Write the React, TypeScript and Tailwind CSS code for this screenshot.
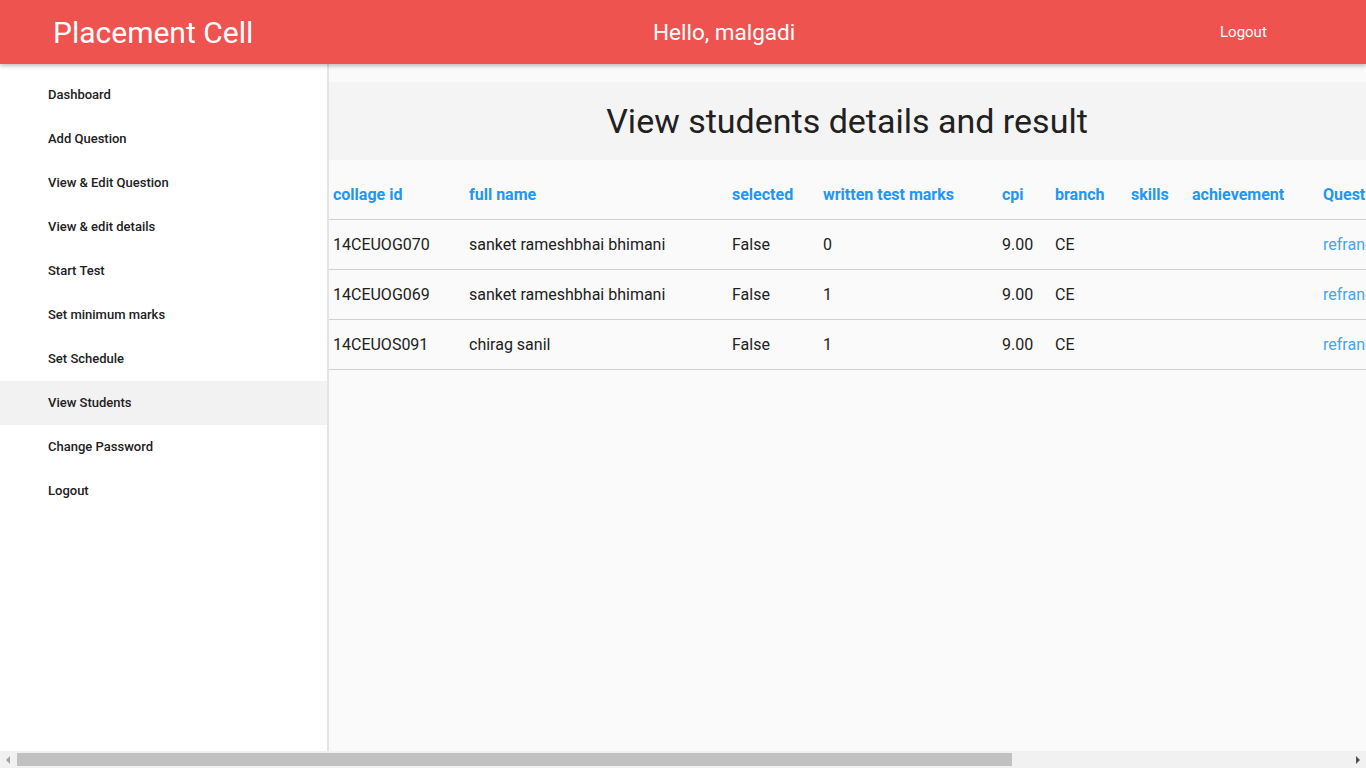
import React from 'react';

const navItems = [
  'Dashboard',
  'Add Question',
  'View & Edit Question',
  'View & edit details',
  'Start Test',
  'Set minimum marks',
  'Set Schedule',
  'View Students',
  'Change Password',
  'Logout',
];

const columns = [
  { label: 'collage id', w: 'w-[136px]' },
  { label: 'full name', w: 'w-[263px]' },
  { label: 'selected', w: 'w-[91px]' },
  { label: 'written test marks', w: 'w-[179px]' },
  { label: 'cpi', w: 'w-[53px]' },
  { label: 'branch', w: 'w-[76px]' },
  { label: 'skills', w: 'w-[61px]' },
  { label: 'achievement', w: 'w-[131px]' },
  { label: 'Questions', w: 'w-[160px]' },
];

const students = [
  { id: '14CEUOG070', name: 'sanket rameshbhai bhimani', selected: 'False', marks: '0', cpi: '9.00', branch: 'CE' },
  { id: '14CEUOG069', name: 'sanket rameshbhai bhimani', selected: 'False', marks: '1', cpi: '9.00', branch: 'CE' },
  { id: '14CEUOS091', name: 'chirag sanil', selected: 'False', marks: '1', cpi: '9.00', branch: 'CE' },
];

function FakeScrollbar() {
  return (
    <div className="h-[17px] shrink-0 bg-[#f1f1f1] flex items-center">
      <div className="w-[17px] h-full flex items-center justify-center">
        <svg width="5" height="8" viewBox="0 0 5 8"><path d="M4 0 L0 4 L4 8 Z" fill="#a3a3a3" /></svg>
      </div>
      <div className="w-[995px] h-[13px] bg-[#c1c1c1]" />
      <div className="flex-1" />
      <div className="w-[17px] h-full flex items-center justify-center">
        <svg width="5" height="8" viewBox="0 0 5 8"><path d="M1 0 L5 4 L1 8 Z" fill="#505050" /></svg>
      </div>
    </div>
  );
}

export default function App() {
  return (
    <div className="w-[1366px] h-screen flex flex-col overflow-hidden font-['Roboto',sans-serif] text-[#212121]">
      {/* Top bar */}
      <header className="h-16 shrink-0 bg-[#ef5350] text-white flex items-center relative z-20 shadow-[0_2px_4px_rgba(0,0,0,0.25)]">
        <div className="w-[653px] pl-[53px] pt-[2px] text-[30px] leading-none">Placement Cell</div>
        <div className="w-[567px] text-[22.5px] leading-none">Hello, malgadi</div>
        <div className="text-[15px] leading-none pt-[1px]">Logout</div>
      </header>

      <div className="flex flex-1 min-h-0">
        {/* Sidebar */}
        <aside className="w-[329px] shrink-0 bg-white border-r-2 border-[#e4e4e4] pt-[9px] relative z-10">
          {navItems.map(item => (
            <div
              key={item}
              className={`h-11 flex items-center pl-12 text-[13px] font-medium text-[#212121] ${
                item === 'View Students' ? 'bg-[#f2f2f2]' : ''
              }`}
            >
              {item}
            </div>
          ))}
        </aside>

        {/* Main */}
        <main className="flex-1 min-w-0 bg-[#fafafa] overflow-hidden pt-[18px] -ml-[1px]">
          <div className="h-[78px] bg-[#f4f4f4] flex items-center justify-center">
            <h4 className="text-[34px] font-normal text-[#212121] leading-none">View students details and result</h4>
          </div>

          <table className="mt-[9px] table-fixed border-collapse w-[1150px] text-[16px]">
            <thead>
              <tr className="h-[50px] border-b border-[#d0d0d0]">
                {columns.map(c => (
                  <th key={c.label} className={`${c.w} px-[5px] pt-[2px] text-left font-bold text-[#2196f3] whitespace-nowrap`}>
                    {c.label}
                  </th>
                ))}
              </tr>
            </thead>
            <tbody>
              {students.map(s => (
                <tr key={s.id} className="h-[50px] border-b border-[#d0d0d0]">
                  <td className="px-[5px] pt-[2px]">{s.id}</td>
                  <td className="px-[5px] pt-[2px]">{s.name}</td>
                  <td className="px-[5px] pt-[2px]">{s.selected}</td>
                  <td className="px-[5px] pt-[2px]">{s.marks}</td>
                  <td className="px-[5px] pt-[2px]">{s.cpi}</td>
                  <td className="px-[5px] pt-[2px]">{s.branch}</td>
                  <td className="px-[5px]"></td>
                  <td className="px-[5px]"></td>
                  <td className="px-[5px] pt-[2px] text-[#42a5f5]">refrance</td>
                </tr>
              ))}
            </tbody>
          </table>
        </main>
      </div>

      <FakeScrollbar />
    </div>
  );
}
